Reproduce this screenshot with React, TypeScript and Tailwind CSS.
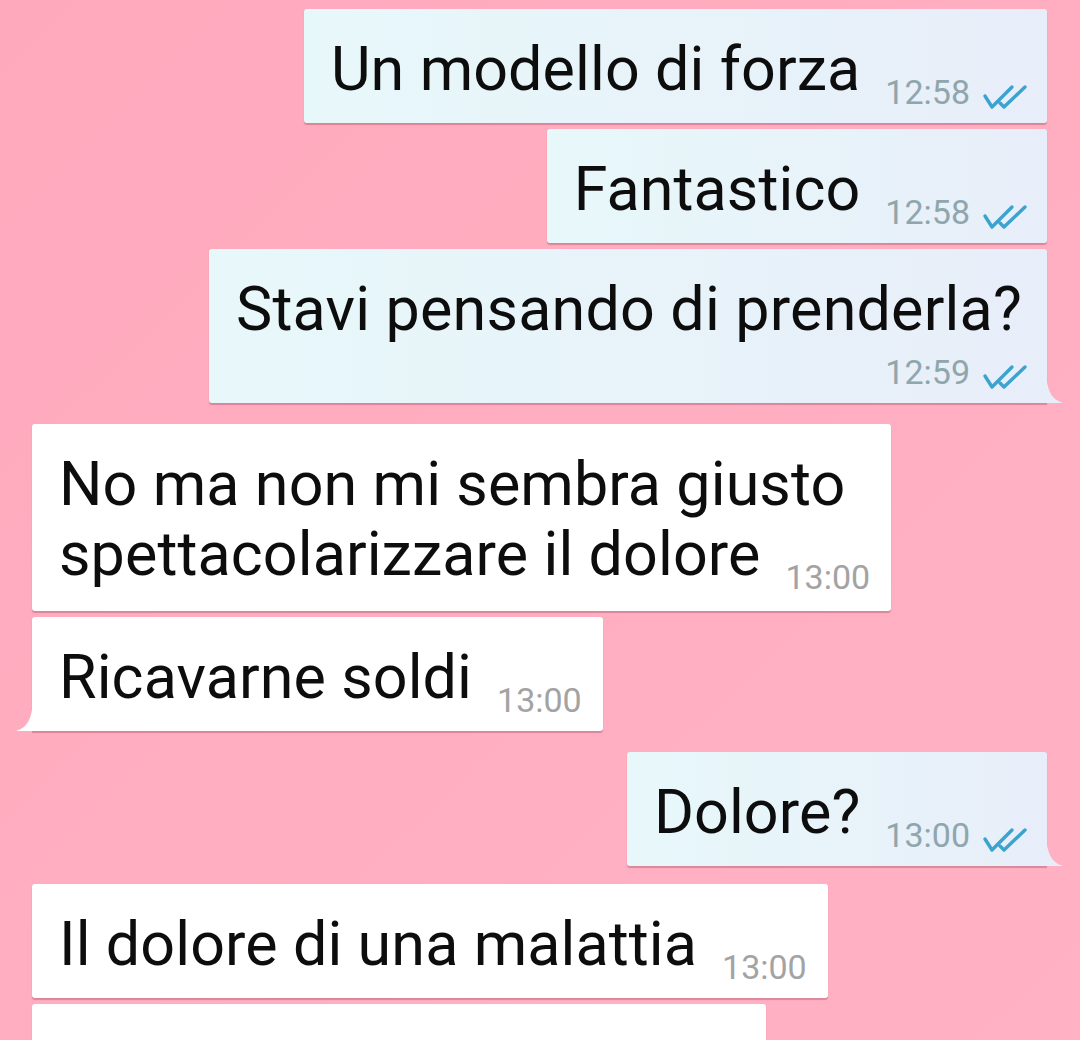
import React from 'react';

type Msg = {
  out: boolean;
  lines: string[];
  time: string;
  tail?: boolean;
  stacked?: boolean; // time drops onto its own line
  gap: string;
};

const messages: Msg[] = [
  { out: true, lines: ['Un modello di forza'], time: '12:58', gap: 'mt-0' },
  { out: true, lines: ['Fantastico'], time: '12:58', gap: 'mt-[6px]' },
  { out: true, lines: ['Stavi pensando di prenderla?'], time: '12:59', tail: true, stacked: true, gap: 'mt-[6px]' },
  { out: false, lines: ['No ma non mi sembra giusto', 'spettacolarizzare il dolore'], time: '13:00', gap: 'mt-[21px]' },
  { out: false, lines: ['Ricavarne soldi'], time: '13:00', tail: true, gap: 'mt-[6px]' },
  { out: true, lines: ['Dolore?'], time: '13:00', tail: true, gap: 'mt-[21px]' },
  { out: false, lines: ['Il dolore di una malattia'], time: '13:00', gap: 'mt-[18px]' },
];

const DoubleTick = () => (
  <svg width="46" height="26" viewBox="0 0 46 26" className="ml-[12px] shrink-0 mb-[2px]" fill="none">
    <path d="M3 12 L10 23 L30 3" stroke="#3aa3cf" strokeWidth="3.4" strokeLinecap="round" strokeLinejoin="round" />
    <path d="M18 19 L22 23 L43 3" stroke="#3aa3cf" strokeWidth="3.4" strokeLinecap="round" strokeLinejoin="round" />
  </svg>
);

const Tail = ({ out }: { out: boolean }) =>
  out ? (
    <svg width="17" height="30" viewBox="0 0 17 30" className="absolute bottom-0 right-[-16px]">
      <path d="M0 0 C1 18 6 27 17 30 L0 30 Z" fill="#e8eef9" />
    </svg>
  ) : (
    <svg width="17" height="30" viewBox="0 0 17 30" className="absolute bottom-0 left-[-16px]">
      <path d="M17 0 C16 18 11 27 0 30 L17 30 Z" fill="#ffffff" />
    </svg>
  );

const Time = ({ m }: { m: Msg }) => (
  <div className={`flex items-end -mb-2 ${m.out ? 'text-[#8fa6ad]' : 'text-[#a3a3a3]'}`}>
    <span className="text-[34px] leading-[40px]">{m.time}</span>
    {m.out && <DoubleTick />}
  </div>
);

const Bubble = ({ m }: { m: Msg }) => {
  const last = m.lines[m.lines.length - 1];
  const rest = m.lines.slice(0, -1);
  return (
    <div className={`flex ${m.out ? 'justify-end' : 'justify-start'} ${m.gap}`}>
      <div
        className={`relative rounded-[3px] pl-[27px] pt-[25px] shadow-[0_1.5px_1px_rgba(150,60,80,0.35)] ${
          m.out
            ? 'bg-gradient-to-r from-[#e7f8fa] to-[#e8eef9] pr-[19px]'
            : 'bg-white pr-[21px]'
        } ${m.lines.length > 1 ? 'pb-[22px]' : 'pb-[19px]'} ${m.tail ? (m.out ? 'rounded-br-none' : 'rounded-bl-none') : ''}`}
      >
        {m.stacked ? (
          <div className="flex flex-col">
            <div className="text-[61px] leading-[70px] tracking-[0.2px] pr-[6px]">{last}</div>
            <div className="self-end mt-[8px]">
              <Time m={m} />
            </div>
          </div>
        ) : (
          <div className="flex flex-col text-[61px] leading-[70px] tracking-[0.1px]">
            {rest.map((l, i) => (
              <div key={i}>{l}</div>
            ))}
            <div className="flex items-end">
              <div>{last}</div>
              <div className="ml-[25px] tracking-normal">
                <Time m={m} />
              </div>
            </div>
          </div>
        )}
        {m.tail && <Tail out={m.out} />}
      </div>
    </div>
  );
};

export default function App() {
  return (
    <div
      className="w-[1080px] h-[1040px] overflow-hidden bg-gradient-to-br from-[#ffa9bd] to-[#ffb2c4] pt-[9px] pl-[32px] pr-[33px] text-[#0d0d0d]"
      style={{ fontFamily: 'Roboto, "Noto Sans", sans-serif' }}
    >
      {messages.map((m, i) => (
        <Bubble key={i} m={m} />
      ))}
      <div className="flex justify-start mt-[6px]">
        <div className="w-[734px] h-[114px] bg-white rounded-[3px] shadow-[0_1.5px_1px_rgba(150,60,80,0.35)]" />
      </div>
    </div>
  );
}
